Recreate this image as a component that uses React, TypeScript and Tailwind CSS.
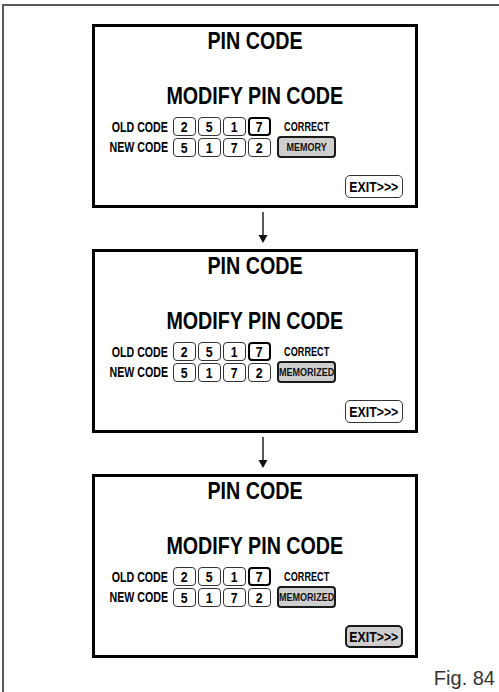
import React from "react";

const FONT = "font-['Liberation_Sans',Arial,sans-serif]";

function N({ children, origin = "center", narrow }: { children: React.ReactNode; origin?: "center" | "right" | "left"; narrow?: boolean }) {
  const o = origin === "right" ? "origin-right" : origin === "left" ? "origin-left" : "origin-center";
  return <span className={"inline-block whitespace-nowrap " + (narrow ? "scale-x-[0.76] " : "scale-x-[0.82] ") + o}>{children}</span>;
}

function Digit({ d, strong }: { d: string; strong?: boolean }) {
  return (
    <div
      className={
        "w-[23px] h-[19px] bg-white rounded-[4px] flex items-center justify-center text-[15px] font-bold leading-none text-black " +
        (strong ? "border-2 border-black" : "border border-[#333]")
      }
    >
      <N>{d}</N>
    </div>
  );
}

function Label({ text }: { text: string }) {
  return (
    <div className="w-[58px] flex justify-end text-[14px] font-bold leading-none text-black">
      <N origin="right" narrow>{text}</N>
    </div>
  );
}

function Panel({ btn, exitPressed }: { btn: string; exitPressed?: boolean }) {
  return (
    <div className={"w-[326px] h-[184px] border-[3px] border-black bg-white flex flex-col " + FONT}>
      <div className="pt-[2px] text-center text-[24px] leading-[24px] font-bold text-black">
        <N>PIN CODE</N>
      </div>
      <div className="mt-[31px] text-center text-[24px] leading-[24px] font-bold text-black">
        <N>MODIFY PIN CODE</N>
      </div>
      <div className="mt-[9px] ml-[15px] flex flex-col">
        <div className="flex items-center h-[19px]">
          <Label text="OLD CODE" />
          <div className="ml-[5px] flex gap-[2px]">
            <Digit d="2" />
            <Digit d="5" />
            <Digit d="1" />
            <Digit d="7" strong />
          </div>
          <div className="ml-[6px] w-[59px] text-center text-[12px] font-bold leading-none text-black">
            <N narrow>CORRECT</N>
          </div>
        </div>
        <div className="flex items-center h-[22px]">
          <Label text="NEW CODE" />
          <div className="ml-[5px] flex gap-[2px]">
            <Digit d="5" />
            <Digit d="1" />
            <Digit d="7" />
            <Digit d="2" />
          </div>
          <div className="ml-[6px] w-[59px] h-[22px] bg-[#cfcfcf] border-2 border-[#1a1a1a] rounded-[4px] flex items-center justify-center text-[11px] font-bold leading-none text-[#111] overflow-hidden">
            <N>{btn}</N>
          </div>
        </div>
      </div>
      <div className="mt-[17px] mr-[12px] flex justify-end">
        <div
          className={
            "w-[58px] h-[23px] rounded-[5px] flex items-center justify-center text-[15px] font-bold leading-none text-black " +
            (exitPressed ? "bg-[#cfcfcf] border-2 border-[#1a1a1a]" : "bg-white border border-[#333]")
          }
        >
          <N>EXIT&gt;&gt;&gt;</N>
        </div>
      </div>
    </div>
  );
}

function Arrow({ h }: { h: number }) {
  return (
    <div className="ml-[165px] w-[12px] flex" style={{ height: h }}>
      <svg width="12" height={h} viewBox={`0 0 12 ${h}`}>
        <line x1="6" y1="4" x2="6" y2={h - 12} stroke="#222" strokeWidth="1.5" />
        <polygon points={`1.5,${h - 14} 10.5,${h - 14} 6,${h - 6}`} fill="#111" />
      </svg>
    </div>
  );
}

export default function App() {
  return (
    <div className="w-[499px] h-[692px] bg-white overflow-hidden">
      <div className="ml-[2px] mt-[4px] h-[688px] border-l-2 border-t-2 border-[#5a5a5a] pl-[88px] pt-[18px] flex flex-col">
        <Panel btn="MEMORY" />
        <Arrow h={41} />
        <Panel btn="MEMORIZED" />
        <Arrow h={41} />
        <Panel btn="MEMORIZED" exitPressed />
        <div className="mt-[10px] self-end mr-[4px] text-[20px] leading-[20px] text-[#333] font-['Liberation_Sans',Arial,sans-serif]">
          Fig. 84
        </div>
      </div>
    </div>
  );
}
